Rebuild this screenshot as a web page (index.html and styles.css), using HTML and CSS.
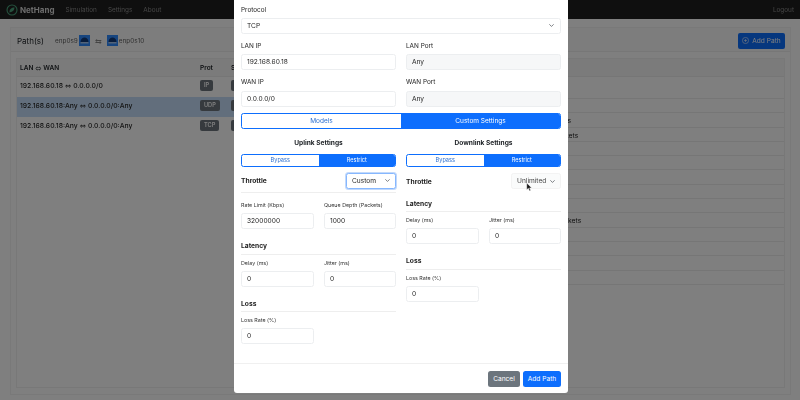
FILE: index.html
```html
<!DOCTYPE html>
<html lang="en">

<head>
    <meta charset="UTF-8">
    <title>NetHang</title>
    <link rel="stylesheet" href="styles.css">
</head>

<body>
    <nav class="navbar">
        <svg class="logo" viewBox="0 0 12 12" width="12" height="12">
            <circle cx="6" cy="6" r="5" fill="none" stroke="#4aa57d" stroke-width="1.1" />
            <path d="M3.5 8.5C3 5.5 5.5 3.5 8.5 3.5 8.5 6 7 8 3.5 8.5Z" fill="#4aa57d" />
        </svg>
        <span class="brand">NetHang</span>
        <a class="nav-link">Simulation</a>
        <a class="nav-link">Settings</a>
        <a class="nav-link">About</a>
        <a class="nav-link logout">Logout</a>
    </nav>

    <main class="page">
        <div class="card">
            <div class="card-header">
                <span class="card-title">Path(s)</span>
                <span class="iface">enp0s9</span>
                <svg class="iface-icon" viewBox="0 0 11 11" width="11" height="11">
                    <rect width="11" height="11" fill="#2f8aff" />
                    <path d="M1.5 7C1.5 4 3.5 2.5 5.5 2.5S9.5 4 9.5 7Z" fill="#123a78" />
                    <rect x="1.5" y="7" width="8" height="1.5" fill="#a8c8f0" />
                </svg>
                <span class="swap">⇆</span>
                <svg class="iface-icon" viewBox="0 0 11 11" width="11" height="11">
                    <rect width="11" height="11" fill="#2f8aff" />
                    <path d="M1.5 7C1.5 4 3.5 2.5 5.5 2.5S9.5 4 9.5 7Z" fill="#123a78" />
                    <rect x="1.5" y="7" width="8" height="1.5" fill="#a8c8f0" />
                </svg>
                <span class="iface">enp0s10</span>
                <button class="add-btn">
                    <svg viewBox="0 0 10 10" width="7" height="7">
                        <circle cx="5" cy="5" r="4.4" fill="none" stroke="currentColor" stroke-width=".8" />
                        <path d="M5 2.8v4.4M2.8 5h4.4" stroke="currentColor" stroke-width=".8" />
                    </svg>
                    Add Path
                </button>
            </div>
            <div class="card-body">
                <div class="table-head">
                    <span class="col-path">LAN <span class="arrow">⇔</span> WAN</span>
                    <span class="col-prot">Prot</span>
                    <span class="col-state">S</span>
                </div>
                <div class="table-split">
                    <div class="paths">
                        <div class="path-row">
                            <span class="col-path">192.168.60.18 <span class="arrow">⇔</span> 0.0.0.0/0</span>
                            <span class="col-prot"><span class="badge">IP</span></span>
                            <span class="col-state"><span class="badge blank"></span></span>
                        </div>
                        <div class="path-row selected">
                            <span class="col-path">192.168.60.18:Any <span class="arrow">⇔</span> 0.0.0.0/0:Any</span>
                            <span class="col-prot"><span class="badge">UDP</span></span>
                            <span class="col-state"><span class="badge blank"></span></span>
                        </div>
                        <div class="path-row">
                            <span class="col-path">192.168.60.18:Any <span class="arrow">⇔</span> 0.0.0.0/0:Any</span>
                            <span class="col-prot"><span class="badge">TCP</span></span>
                            <span class="col-state"><span class="badge blank"></span></span>
                        </div>
                    </div>
                    <div class="stats">
                        <div class="stat-row first"></div>
                        <div class="stat-row"></div>
                        <div class="stat-row">Bytes</div>
                        <div class="stat-row">Packets</div>
                        <div class="stat-row"></div>
                        <div class="stat-row"></div>
                        <div class="stat-row"></div>
                        <div class="stat-row"></div>
                        <div class="stat-row"></div>
                        <div class="stat-row shifted">Packets</div>
                        <div class="stat-row"></div>
                        <div class="stat-row"></div>
                        <div class="stat-row"></div>
                        <div class="stat-row"></div>
                    </div>
                </div>
            </div>
        </div>
    </main>

    <div class="overlay">
        <div class="modal">
            <div class="modal-body">
                <div class="field protocol">
                    <label>Protocol</label>
                    <select class="control">
                        <option>TCP</option>
                    </select>
                </div>
                <div class="field-row">
                    <div class="field">
                        <label>LAN IP</label>
                        <input class="control" value="192.168.60.18">
                    </div>
                    <div class="field">
                        <label>LAN Port</label>
                        <input class="control" value="Any" disabled>
                    </div>
                </div>
                <div class="field-row">
                    <div class="field">
                        <label>WAN IP</label>
                        <input class="control" value="0.0.0.0/0">
                    </div>
                    <div class="field">
                        <label>WAN Port</label>
                        <input class="control" value="Any" disabled>
                    </div>
                </div>

                <div class="toggle main-toggle">
                    <span class="toggle-item">Models</span>
                    <span class="toggle-item active">Custom Settings</span>
                </div>

                <div class="settings">
                    <div class="direction">
                        <div class="direction-title">Uplink Settings</div>
                        <div class="toggle small-toggle">
                            <span class="toggle-item">Bypass</span>
                            <span class="toggle-item active">Restrict</span>
                        </div>
                        <div class="throttle ruled">
                            <span class="section-title">Throttle</span>
                            <select class="control mini focused">
                                <option>Custom</option>
                            </select>
                        </div>
                        <div class="mini-row after-throttle">
                            <div class="mini-field">
                                <label>Rate Limit (Kbps)</label>
                                <input class="control" value="32000000">
                            </div>
                            <div class="mini-field">
                                <label>Queue Depth (Packets)</label>
                                <input class="control" value="1000">
                            </div>
                        </div>
                        <div class="section-title ruled spaced">Latency</div>
                        <div class="mini-row">
                            <div class="mini-field">
                                <label>Delay (ms)</label>
                                <input class="control" value="0">
                            </div>
                            <div class="mini-field">
                                <label>Jitter (ms)</label>
                                <input class="control" value="0">
                            </div>
                        </div>
                        <div class="section-title ruled spaced">Loss</div>
                        <div class="mini-row">
                            <div class="mini-field">
                                <label>Loss Rate (%)</label>
                                <input class="control" value="0">
                            </div>
                            <div class="mini-field"></div>
                        </div>
                    </div>

                    <div class="direction">
                        <div class="direction-title">Downlink Settings</div>
                        <div class="toggle small-toggle">
                            <span class="toggle-item">Bypass</span>
                            <span class="toggle-item active">Restrict</span>
                        </div>
                        <div class="throttle">
                            <span class="section-title">Throttle</span>
                            <select class="control mini plain">
                                <option>Unlimited</option>
                            </select>
                        </div>
                        <div class="section-title ruled first-section">Latency</div>
                        <div class="mini-row">
                            <div class="mini-field">
                                <label>Delay (ms)</label>
                                <input class="control" value="0">
                            </div>
                            <div class="mini-field">
                                <label>Jitter (ms)</label>
                                <input class="control" value="0">
                            </div>
                        </div>
                        <div class="section-title ruled spaced">Loss</div>
                        <div class="mini-row">
                            <div class="mini-field">
                                <label>Loss Rate (%)</label>
                                <input class="control" value="0">
                            </div>
                            <div class="mini-field"></div>
                        </div>
                    </div>
                </div>
            </div>
            <div class="modal-footer">
                <button class="btn btn-cancel">Cancel</button>
                <button class="btn btn-add">Add Path</button>
            </div>
        </div>
        <svg class="cursor" viewBox="0 0 8 12" width="6" height="9">
            <path d="M1 0v9l2.2-2 1.5 3.5 1.5-.7L4.7 6.5H7.5Z" fill="#111" stroke="#fff" stroke-width=".6" />
        </svg>
    </div>
</body>

</html>
```

FILE: styles.css
```css
* {
    box-sizing: border-box;
}

body {
    margin: 0;
    width: 800px;
    height: 400px;
    overflow: hidden;
    background-color: #fff;
    font-family: Inter, "Liberation Sans", sans-serif;
    font-size: 7px;
    color: #212529;
    filter: blur(0.3px);
}

/* navbar */
.navbar {
    display: flex;
    align-items: center;
    height: 19px;
    padding: 0 6px;
    background-color: #1e1e1e;
}

.logo {
    margin-right: 2px;
}

.brand {
    font-size: 8px;
    font-weight: 700;
    color: #d8d8d8;
    margin-right: 11px;
}

.nav-link {
    font-size: 6.4px;
    color: #8c8c8c;
    margin-right: 11px;
}

.nav-link.logout {
    margin-left: auto;
    margin-right: 0;
}

/* background page */
.page {
    padding: 8px 9px 5px 10px;
    height: 381px;
}

.card {
    height: 100%;
    display: flex;
    flex-direction: column;
    border: 1px solid #f2f2f2;
    background-color: #fff;
}

.card-header {
    display: flex;
    align-items: center;
    height: 24px;
    padding: 2px 5px 0 6px;
    background-color: #fafafa;
    border-bottom: 1px solid #eee;
}

.card-title {
    font-size: 8px;
    margin-right: 11px;
}

.iface {
    font-size: 6.4px;
    color: #666;
}

.iface-icon {
    margin: 0 1px;
}

.swap {
    font-size: 8px;
    color: #888;
    margin: 0 4px;
}

.add-btn {
    display: flex;
    align-items: center;
    justify-content: center;
    gap: 3px;
    margin-left: auto;
    width: 47px;
    height: 16px;
    padding: 0;
    border: 0;
    border-radius: 2px;
    background-color: #0d6efd;
    color: #fff;
    font: 6.6px Inter, sans-serif;
}

.card-body {
    flex: 1;
    margin: 6px 5px;
    border: 1px solid #f0f0f0;
    display: flex;
    flex-direction: column;
}

.table-head {
    display: flex;
    align-items: center;
    height: 18px;
    flex: none;
    background-color: #f6f6f6;
    border-bottom: 1px solid #ededed;
    font-size: 6.5px;
    font-weight: 600;
}

.table-split {
    display: flex;
}

.paths {
    width: 533px;
}

.col-path {
    width: 183px;
    padding-left: 3px;
}

.col-prot {
    width: 31px;
}

.arrow {
    font-size: 5px;
}

.path-row {
    display: flex;
    align-items: center;
    height: 20px;
    padding-bottom: 3px;
    font-size: 6.8px;
    font-weight: 500;
    color: #2a2a2a;
}

.path-row.selected {
    background-color: #c4ddf8;
}

.badge {
    display: inline-block;
    padding: 2px 4px;
    border-radius: 2px;
    background-color: #6c757d;
    color: #fff;
    font-size: 5.6px;
    font-weight: 600;
    line-height: 7px;
}

.badge.blank {
    width: 14px;
    height: 11px;
    vertical-align: middle;
}

.stats {
    flex: 1;
    font-size: 6.8px;
    color: #222;
}

.stat-row {
    height: 14.3px;
    line-height: 16px;
    margin-left: 3px;
    border-bottom: 1px solid #ededed;
}

.stat-row.first {
    height: 22px;
}

.stat-row.shifted {
    text-indent: 3px;
}

/* dialog over the page */
.overlay {
    position: fixed;
    inset: 0;
    background-color: rgba(0, 0, 0, 0.5);
}

.modal {
    position: absolute;
    left: 234px;
    top: 0;
    width: 334px;
    height: 393px;
    display: flex;
    flex-direction: column;
    background-color: #fff;
    border-radius: 0 0 3px 3px;
}

.modal-body {
    flex: 1;
    padding: 5px 7px 0;
    overflow: hidden;
}

.modal-footer {
    display: flex;
    justify-content: flex-end;
    gap: 3px;
    height: 30px;
    padding: 7px;
    border-top: 1px solid #f0f0f0;
}

.btn {
    height: 16px;
    padding: 0;
    border: 0;
    border-radius: 2.5px;
    color: #fff;
    font: 6.6px Inter, sans-serif;
}

.btn-cancel {
    width: 32px;
    background-color: #6c757d;
}

.btn-add {
    width: 38px;
    background-color: #0d6efd;
}

.field label {
    display: block;
    height: 10px;
    line-height: 10px;
    margin-bottom: 3.5px;
    font-size: 6.4px;
    color: #222;
}

.field.protocol label {
    margin-bottom: 2.5px;
}

.control {
    display: block;
    width: 100%;
    height: 16px;
    padding: 0 5px;
    border: 1px solid #eceef0;
    border-radius: 2.5px;
    background-color: #fff;
    color: #222;
    font: 6.6px Inter, sans-serif;
    outline: none;
    appearance: none;
}

.control:disabled {
    background-color: #f6f7f8;
    color: #222;
}

select.control {
    background-image: url("data:image/svg+xml,%3csvg xmlns='http://www.w3.org/2000/svg' viewBox='0 0 16 16'%3e%3cpath fill='none' stroke='%23343a40' stroke-linecap='round' stroke-linejoin='round' stroke-width='2' d='m2 5 6 6 6-6'/%3e%3c/svg%3e");
    background-repeat: no-repeat;
    background-position: right 6px center;
    background-size: 5px 5px;
}

.field-row {
    display: grid;
    grid-template-columns: 155px 155px;
    column-gap: 10px;
    margin-top: 7px;
}

.toggle {
    display: flex;
    border: 1px solid #0d6efd;
    border-radius: 2.5px;
    overflow: hidden;
    color: #2b6fd0;
}

.toggle-item {
    flex: 1;
    display: flex;
    align-items: center;
    justify-content: center;
}

.toggle-item.active {
    background-color: #0d6efd;
    color: #fff;
}

.main-toggle {
    height: 16px;
    margin-top: 6px;
    font-size: 6.5px;
}

.small-toggle {
    height: 13px;
    margin-top: 6px;
    font-size: 5.6px;
}

.settings {
    display: grid;
    grid-template-columns: 155px 155px;
    column-gap: 10px;
}

.direction-title {
    height: 10px;
    line-height: 10px;
    margin-top: 9px;
    text-align: center;
    font-size: 6.6px;
    font-weight: 700;
}

.section-title {
    display: block;
    line-height: 10px;
    font-size: 6.7px;
    font-weight: 700;
    color: #222;
}

.ruled {
    border-bottom: 1px solid #eeeeee;
}

.section-title.ruled {
    height: 13.5px;
    padding-bottom: 3px;
}

.section-title.spaced {
    margin-top: 12px;
}

.section-title.first-section {
    margin-top: 9.5px;
}

.throttle {
    display: flex;
    align-items: center;
    justify-content: space-between;
    margin-top: 6.5px;
}

.throttle .section-title {
    padding-top: 1px;
}

.throttle.ruled {
    height: 20px;
    padding-bottom: 4px;
}

.control.mini {
    width: 50px;
    padding: 0 5px;
    background-position: right 5px center;
}

.control.focused {
    border-color: #86b7fe;
    box-shadow: 0 0 0 1px #c2d9fb;
}

.control.plain {
    background-color: #fafbfb;
    border-color: #f3f3f3;
    color: #444;
}

.mini-row {
    display: grid;
    grid-template-columns: 73px 72px;
    column-gap: 10px;
    margin-top: 4px;
}

.mini-row.after-throttle {
    margin-top: 8px;
}

.mini-field label {
    display: block;
    height: 9px;
    line-height: 9px;
    margin-bottom: 3px;
    font-size: 5.35px;
    color: #333;
}

.cursor {
    position: absolute;
    left: 526px;
    top: 183px;
}
```
